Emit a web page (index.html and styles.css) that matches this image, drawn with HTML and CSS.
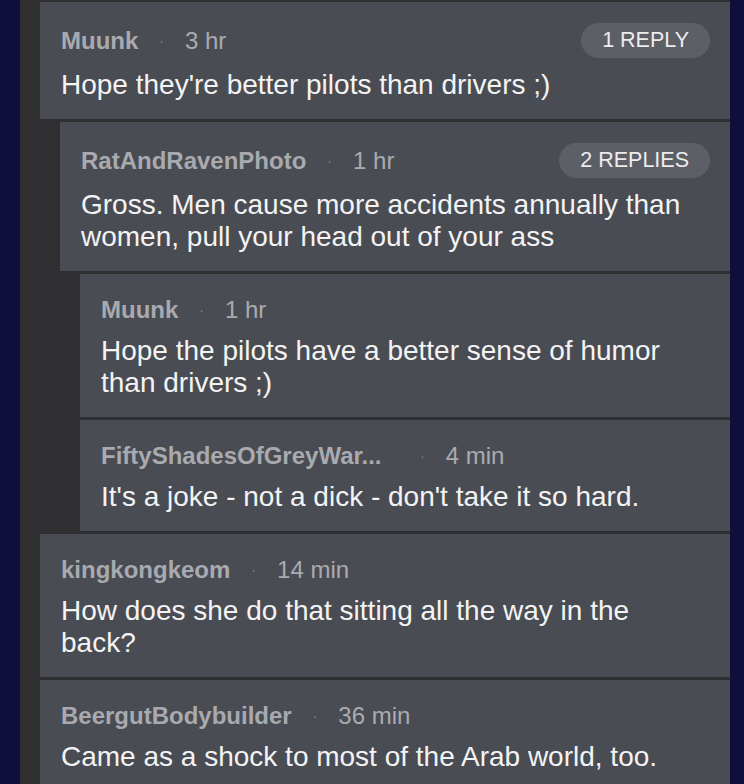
FILE: index.html
```
<!DOCTYPE html>
<html>
<head>
<meta charset="utf-8">
<link rel="stylesheet" href="styles.css">
</head>
<body>
<div class="panel">
  <div class="comment l0 has-pill">
    <div class="meta"><span class="name">Muunk</span><span class="dot">·</span><span class="time">3 hr</span><span class="pill">1 REPLY</span></div>
    <div class="text">Hope they're better pilots than drivers ;)</div>
  </div>
  <div class="comment l1 has-pill">
    <div class="meta"><span class="name">RatAndRavenPhoto</span><span class="dot">·</span><span class="time">1 hr</span><span class="pill">2 REPLIES</span></div>
    <div class="text">Gross. Men cause more accidents annually than women, pull your head out of your ass</div>
  </div>
  <div class="comment l2">
    <div class="meta"><span class="name">Muunk</span><span class="dot">·</span><span class="time">1 hr</span></div>
    <div class="text">Hope the pilots have a better sense of humor than drivers ;)</div>
  </div>
  <div class="comment l2">
    <div class="meta"><span class="name trunc">FiftyShadesOfGreyWar...</span><span class="dot">·</span><span class="time">4 min</span></div>
    <div class="text">It's a joke - not a dick - don't take it so hard.</div>
  </div>
  <div class="comment l0">
    <div class="meta"><span class="name">kingkongkeom</span><span class="dot">·</span><span class="time">14 min</span></div>
    <div class="text">How does she do that sitting all the way in the back?</div>
  </div>
  <div class="comment l0">
    <div class="meta"><span class="name">BeergutBodybuilder</span><span class="dot">·</span><span class="time">36 min</span></div>
    <div class="text">Came as a shock to most of the Arab world, too.</div>
  </div>
</div>
</body>
</html>
```
FILE: styles.css
```
html, body {
  margin: 0;
  padding: 0;
}
body {
  background: #100f3c;
  font-family: "Liberation Sans", Arial, sans-serif;
  width: 744px;
  height: 784px;
  overflow: hidden;
}
.panel {
  margin-left: 20px;
  width: 710px;
  height: 784px;
  background: #2f2f32;
  padding-top: 2px;
  box-sizing: border-box;
  display: flex;
  flex-direction: column;
  gap: 3px;
  overflow: hidden;
}
.comment {
  background: #4a4c53;
  padding: 22px 20px 18px 21px;
  flex-shrink: 0;
}
.has-pill {
  padding-top: 21px;
  padding-bottom: 18px;
}
.l0 { margin-left: 20px; }
.l1 { margin-left: 40px; }
.l2 { margin-left: 60px; }
.meta {
  display: flex;
  align-items: center;
  min-height: 28px;
  font-size: 24px;
  line-height: 28px;
}
.name {
  font-weight: bold;
  color: #a8aaaf;
}
.trunc {
  display: inline-block;
  width: 298px;
}
.dot {
  color: #85878d;
  font-size: 14px;
  margin: 0 21px;
}
.time {
  color: #a9abb0;
}
.pill {
  margin-left: auto;
  height: 35px;
  line-height: 35px;
  padding: 0 21px;
  border-radius: 18px;
  background: #5d5f66;
  color: #ececee;
  font-size: 21.5px;
}
.text {
  margin-top: 11px;
  font-size: 28px;
  line-height: 32px;
  color: #f3f3f4;
}
```
